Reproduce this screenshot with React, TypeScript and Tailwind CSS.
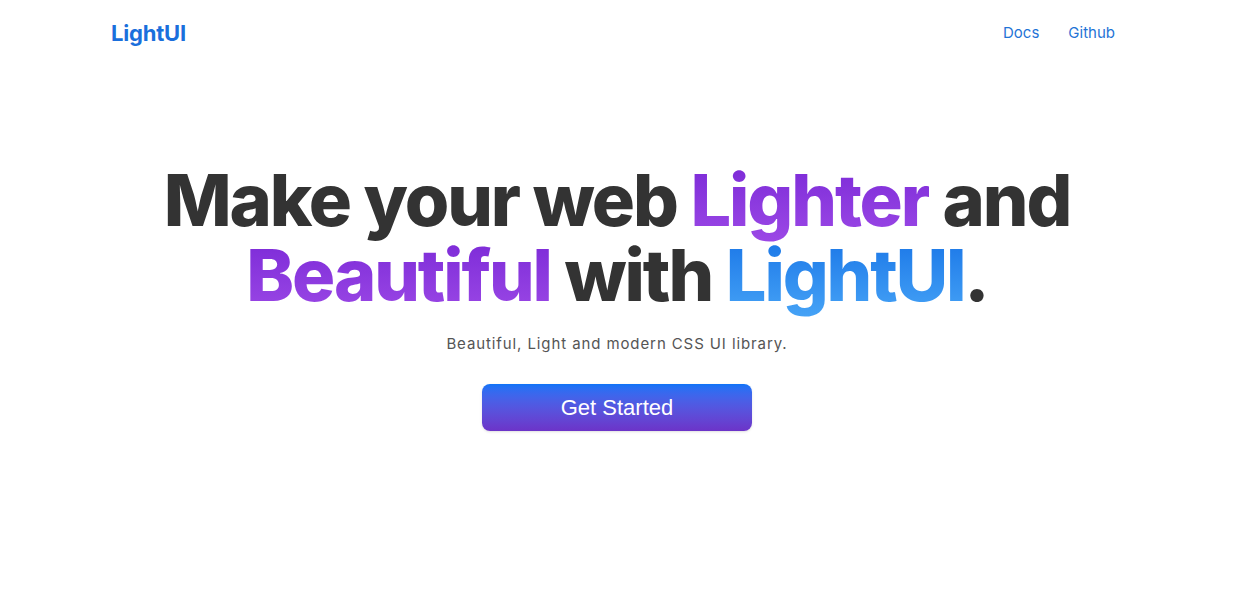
export default function App() {
  return (
    <main className="min-h-screen bg-white font-['Inter',sans-serif]">
      <header className="mx-auto flex h-[66px] max-w-[1012px] items-center justify-between">
        <a href="#" className="text-[22px] font-bold tracking-[-0.2px] text-[#1a6fdc]">
          LightUI
        </a>
        <nav className="mr-[8px] flex items-center gap-[29px] text-[15px] text-[#1f74d6]">
          <a href="#">Docs</a>
          <a href="#">Github</a>
        </nav>
      </header>

      <section className="flex flex-col items-center pt-[96px] text-center">
        <h1 className="text-[72px] font-extrabold leading-[75px] tracking-[-2.1px] text-[#333333]">
          Make your web{" "}
          <span className="bg-gradient-to-b from-[#7a26d6] to-[#9c48e6] bg-clip-text text-transparent">
            Lighter
          </span>{" "}
          and
          <br />
          <span className="bg-gradient-to-b from-[#7a26d6] to-[#9c48e6] bg-clip-text text-transparent">
            Beautiful
          </span>{" "}
          with{" "}
          <span className="bg-gradient-to-b from-[#1673e6] to-[#46a3f6] bg-clip-text text-transparent">
            LightUI
          </span>
          .
        </h1>
        <p className="mt-[21px] text-[15px] tracking-[0.9px] text-[#555555]">
          Beautiful, Light and modern CSS UI library.
        </p>
        <button className="mt-[28px] h-[47px] w-[270px] rounded-[8px] bg-gradient-to-b from-[#0d73f7] to-[#6c33c8] font-['Liberation_Sans',sans-serif] text-[22px] text-white shadow-sm">
          Get Started
        </button>
      </section>
    </main>
  )
}
